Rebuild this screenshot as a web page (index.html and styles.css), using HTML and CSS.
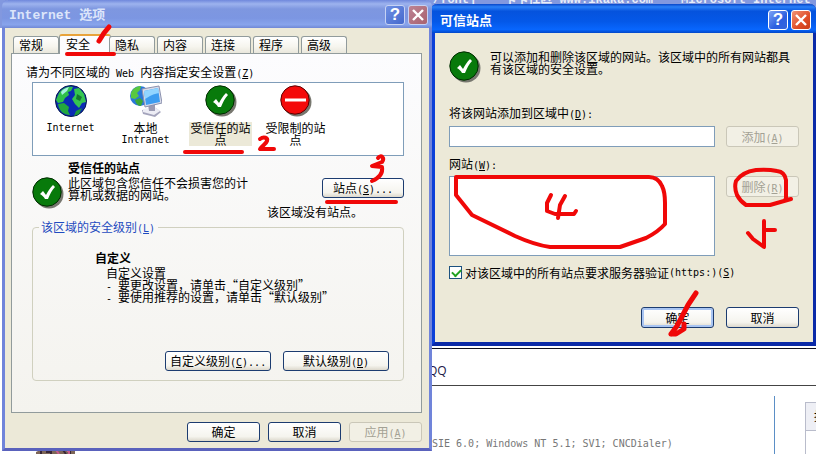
FILE: index.html
```html
<!DOCTYPE html>
<html lang="zh-CN">
<head>
<meta charset="utf-8">
<title>Internet 选项</title>
<link rel="stylesheet" href="styles.css">
</head>
<body>
<svg class="defs" aria-hidden="true">
  <symbol id="check" viewBox="0 0 32 32">
    <circle cx="17" cy="17" r="14.5" fill="#77776f"/>
    <circle cx="15" cy="15" r="14.2" fill="#087a0b" stroke="#002c00"/>
    <path d="M8 17l3-3 3 4c2-4 4-7 7-10l2 2c-3 3-5 7-7 12h-3c-1-2-3-4-5-5z" fill="#fff"/>
  </symbol>
</svg>
<div class="desktop">
  <main class="page">
    <div class="page-title"><span>/font]</span><span>卡卡社区 www.ikaka.com</span><span>Microsoft Internet Ex</span></div>
    <div class="page-body">
      <p class="page-qq">QQ</p>
      <div class="page-row">
        <p class="agent">SIE 6.0; Windows NT 5.1; SV1; CNCDialer)</p>
        <div class="side"><div class="side-head">报</div></div>
      </div>
    </div>
    <svg class="picture" viewBox="0 0 39 4" aria-hidden="true">
      <path d="M0 4V2L4 0H39V4z" fill="#7d6658"/>
      <path d="M5 0v4M10 2h5v2M27 0l3 4M34 0v4" stroke="#382736" stroke-width="2" fill="none"/>
      <path d="M20 0l3 4M31 1h2v3" stroke="#c8598c" stroke-width="2"/>
    </svg>
  </main>

  <section class="window sites">
    <header class="titlebar">
      <h1>可信站点</h1>
      <button class="cap" aria-label="帮助">?</button>
      <button class="cap close" aria-label="关闭"><svg viewBox="0 0 18 18"><path d="M4 4l10 10M14 4L4 14"/></svg></button>
    </header>
    <div class="sites-body">
      <div class="intro">
        <svg class="icon"><use href="#check"/></svg>
        <p>可以添加和删除该区域的网站。该区域中的所有网站都具有该区域的安全设置。</p>
      </div>
      <label class="add-label" for="site">将该网站添加到区域中<span class="la">(<u>D</u>):</span></label>
      <div class="row">
        <input id="site" class="box" type="text">
        <button class="btn" disabled>添加<span class="la">(<u>A</u>)</span></button>
      </div>
      <label class="list-label" for="list">网站<span class="la">(<u>W</u>):</span></label>
      <div class="row">
        <select id="list" class="box list" size="5"></select>
        <button class="btn" disabled>删除<span class="la">(<u>R</u>)</span></button>
      </div>
      <label class="verify"><input type="checkbox" checked>对该区域中的所有站点要求服务器验证<span class="la">(https:)(<u>S</u>)</span></label>
      <footer class="actions">
        <button class="btn default">确定</button>
        <button class="btn">取消</button>
      </footer>
    </div>
  </section>

  <section class="window options">
    <header class="titlebar">
      <h1><span class="lt">Internet </span>选项</h1>
      <button class="cap" aria-label="帮助">?</button>
      <button class="cap close" aria-label="关闭"><svg viewBox="0 0 18 18"><path d="M4 4l10 10M14 4L4 14"/></svg></button>
    </header>
    <div class="options-body">
      <nav class="tabs">
        <button class="tab">常规</button>
        <button class="tab selected">安全</button>
        <button class="tab">隐私</button>
        <button class="tab">内容</button>
        <button class="tab">连接</button>
        <button class="tab">程序</button>
        <button class="tab">高级</button>
      </nav>
      <div class="pane">
        <p class="prompt">请为不同区域的<span class="la"> Web </span>内容指定安全设置<span class="la">(<u>Z</u>)</span></p>
        <div class="zones">
          <button class="zone">
            <svg class="icon" viewBox="0 0 32 32">
              <circle cx="16" cy="16" r="15.5" fill="#0a2cb4" stroke="#06184a"/>
              <path d="M4 8C8 2 14 1 18 2l-2 4-3 1 1 3-4 3-2 4-5 1-2-3z" fill="#2fc04a"/>
              <path d="M3 19l6-1 5 4-1 4 2 4C9 30 4 26 3 19z" fill="#23a83d"/>
              <path d="M19 4l5-1 5 6 2 8-4 1-3 5-4-4-3-5 3-4z" fill="#35c650"/>
              <path d="M21 26l6-3-3 6-5 2z" fill="#1e9a38"/>
              <path d="M6 7c2-3 5-4 8-5l-2 4-5 4z" fill="#a6f0e0"/>
              <path d="M22 9l5 3-2 4-4-2z" fill="#147a30"/>
            </svg>
            <span class="la">Internet</span>
          </button>
          <button class="zone">
            <svg class="icon" viewBox="0 0 32 32">
              <circle cx="10" cy="11" r="10" fill="#2a78d8"/>
              <path d="M1 8C3 3 7 1 11 1l-1 4-3 3 2 3-4 3-4-1z" fill="#58c840"/>
              <path d="M5 15l5-2 3 3-2 5C8 21 6 19 5 15z" fill="#3da836"/>
              <path d="M12 25l14-2 5 4-6 5-12-3z" fill="#a4a4bc"/>
              <path d="M13 24l12-2 5 4-6 4-11-3z" fill="#ededf5"/>
              <path d="M18 19h7v7h-6z" fill="#9a9ab2"/>
              <path d="M12 4L29 1l3 17-17 4z" fill="#d9dcea" stroke="#8b91ae"/>
              <path d="M14 6l14-3 2 14-14 3z" fill="#3d9df0"/>
              <path d="M14 6l14-3 1 5c-6 1-9 3-14 6z" fill="#92d5ff"/>
            </svg>
            <span>本地</span><span class="la">Intranet</span>
          </button>
          <button class="zone picked">
            <svg class="icon"><use href="#check"/></svg>
            <span class="name">受信任的站点</span>
          </button>
          <button class="zone">
            <svg class="icon" viewBox="0 0 32 32">
              <circle cx="17" cy="17" r="14.5" fill="#77776f"/>
              <circle cx="15" cy="15" r="14.2" fill="#f40a0a" stroke="#5c0000"/>
              <path d="M5 13.500h21v3H5z" fill="#fff"/>
            </svg>
            <span class="name">受限制的站点</span>
          </button>
        </div>
        <div class="detail">
          <svg class="icon"><use href="#check"/></svg>
          <div class="about">
            <h2>受信任的站点</h2>
            <p>此区域包含您信任不会损害您的计算机或数据的网站。</p>
          </div>
          <div class="manage">
            <button class="btn">站点<span class="la">(<u>S</u>)...</span></button>
            <p>该区域没有站点。</p>
          </div>
        </div>
        <fieldset>
          <legend>该区域的安全级别<span class="la">(<u>L</u>)</span></legend>
          <h2>自定义</h2>
          <div class="level">
            <p>自定义设置</p>
            <p><span class="la">- </span>要更改设置，请单击“自定义级别”</p>
            <p><span class="la">- </span>要使用推荐的设置，请单击“默认级别”</p>
          </div>
          <div class="level-buttons">
            <button class="btn">自定义级别<span class="la">(<u>C</u>)...</span></button>
            <button class="btn">默认级别<span class="la">(<u>D</u>)</span></button>
          </div>
        </fieldset>
      </div>
      <footer class="dialog-buttons">
        <button class="btn">确定</button>
        <button class="btn">取消</button>
        <button class="btn" disabled>应用<span class="la">(<u>A</u>)</span></button>
      </footer>
    </div>
  </section>

  <svg class="marks" viewBox="0 0 816 454" aria-hidden="true">
    <path d="M67 54H114M185 152H242M327 202H396"/>
    <path class="thick" d="M109 27L104 33L99 41"/>
    <path d="M260 139C264 136 268 138 267 141C266 144 262 146 260 149L274 149"/>
    <path d="M378 158C381 154 385 158 382 162L372 166L382 167C383 173 379 178 372 181"/>
    <path d="M456 177H649Q658 177 662 186Q665 192 665 203V224Q658 232 646 238L620 247H550Q535 245 515 236L472 215L456 195Z"/>
    <path d="M551 195L547 203V211L555 214H574L576 211M565 196L560 205L558 218"/>
    <path d="M786 200V180Q785 172 777 171Q768 169 756 170Q742 172 736 181Q734 188 737 195Q740 201 746 205H770L791 199M785 200L791 199"/>
    <path d="M748 233L753 239L764 247V221M765 230H775"/>
    <path class="thick" d="M696 293L688 305L677 326L671 334M671 334H676L684 329V324"/>
  </svg>
</div>
</body>
</html>
```
FILE: styles.css
```css
* { box-sizing: border-box; }

body {
  margin: 0;
  font: 12px/12px "Noto Sans CJK SC", sans-serif;
  text-spacing-trim: space-all;
  color: #000;
}

h1, h2, p { margin: 0; }
h2 { font-size: 12px; line-height: 12px; }

button, input, select {
  font: inherit;
  color: inherit;
  margin: 0;
  border-radius: 0;
}

.la { font-family: "DejaVu Sans Mono", monospace; font-size: 10px; line-height: 0; white-space: pre; }
.defs { position: absolute; width: 0; height: 0; }
.icon { display: block; width: 32px; height: 32px; flex: none; }

.desktop { position: relative; min-height: 100vh; overflow: hidden; background: #fff; }

/* browser page behind the dialogs */
.page { display: flex; flex-direction: column; min-height: 100vh; }
.page-title {
  display: flex;
  gap: 28px;
  height: 28px;
  padding-left: 433px;
  background: #8298df;
  color: #e8eefa;
  font: bold 12px/14px "Liberation Mono", "Noto Sans CJK SC", monospace;
  white-space: nowrap;
  overflow: hidden;
}
.page-title span { margin-top: -7px; }
.page-body {
  flex: 1;
  display: flex;
  flex-direction: column;
  margin: 320px 0 0 432px;
  border-top: 1px solid #101020;
}
.page-qq {
  height: 37px;
  padding-top: 16px;
  margin-left: -4px;
  border-bottom: 1px solid #444;
  font-family: "Open Sans", sans-serif;
  color: #201848;
}
.page-row { flex: 1; display: flex; align-items: stretch; padding-top: 10px; }
.agent {
  flex: 1;
  padding-top: 42px;
  border-right: 1px solid #5b8fc6;
  font: 10px/12px "DejaVu Sans Mono", monospace;
  color: #777;
}
.side { width: 11px; margin: 6px 0 0 30px; border: solid #b9bccb; border-width: 1px 0 0 1px; overflow: hidden; }
.side-head { height: 28px; padding: 7px 0 0 8px; border-bottom: 1px solid #b9bccb; background: #eeeff5; }
.picture { position: absolute; left: 36px; bottom: 0; width: 39px; height: 4px; }

/* window chrome */
.window { position: absolute; background: #ece9d8; }
.titlebar { display: flex; align-items: center; gap: 3px; }
.titlebar h1 { flex: 1; font-size: 13px; line-height: 16px; color: #fff; }
.lt { font-family: "Liberation Mono", monospace; white-space: pre; }
.cap {
  width: 20px;
  height: 20px;
  padding: 0;
  border: 1px solid #fff;
  border-radius: 3px;
  background: linear-gradient(135deg, #7da2f5, #2c5fe0 60%, #3565dc);
  color: #fff;
  font: bold 17px/18px "Liberation Sans", sans-serif;
}
.cap svg { display: block; width: 18px; height: 18px; }
.cap path { stroke: #fff; stroke-width: 2.4; fill: none; }
.close { background: linear-gradient(135deg, #f19376, #df4d27 60%, #c93d17); }

.btn {
  min-width: 73px;
  height: 20px;
  padding: 0 4px;
  border: 1px solid #1c3c70;
  border-radius: 3px;
  background: linear-gradient(#fff, #f5f4ee 75%, #dcd8cc);
  line-height: 16px;
  white-space: nowrap;
}
.btn:disabled { border-color: #cac7b8; background: #f2f0e5; color: #a3a194; }

/* internet options */
.options {
  top: 0;
  left: 2px;
  width: 430px;
  border: solid #7084da;
  border-width: 0 3px 3px;
  border-bottom-color: #5a62bc;
  border-radius: 6px 6px 0 0;
}
.options .titlebar {
  height: 28px;
  margin: 0 -3px;
  padding: 2px 4px 0 7px;
  border-radius: 6px 6px 0 0;
  background: linear-gradient(#7088dc, #9db3ee 14%, #7e97e0 32%, #7c96e2 65%, #88a4ec 88%, #7088d6);
}
.options h1 { color: #dce5fa; }
.options .cap { border-color: #c6d2f4; background: linear-gradient(135deg, #6f90e4, #4468cc); }
.options .close { background: linear-gradient(135deg, #bd8394, #a8626f); }
.options-body { padding: 6px 7px 6px 6px; }

.tabs { display: flex; align-items: flex-end; gap: 2px; height: 20px; padding-left: 2px; margin-bottom: -1px; position: relative; }
.tab {
  width: 46px;
  height: 17px;
  margin-bottom: 1px;
  padding: 0 0 0 5px;
  border: 1px solid #919b9c;
  border-bottom: 0;
  border-radius: 3px 3px 0 0;
  background: linear-gradient(#fff, #f6f5ee 60%, #e9e7dc);
  line-height: 16px;
  text-align: left;
}
.tab.selected {
  width: 52px;
  height: 20px;
  margin: 0 -4px 0 -2px;
  padding: 0 0 2px 6px;
  border-top: 2px solid #e8a33a;
  background: #fcfcfe;
}

.pane {
  padding: 12px 17px 31px 20px;
  border: 1px solid #919b9c;
  background: linear-gradient(#fcfcfe, #f4f3ee);
}
.prompt { margin-left: -6px; }
.zones { display: flex; margin-top: 4px; padding: 2px 0 9px; border: 1px solid #7f9db9; background: #fff; }
.zone {
  display: flex;
  flex-direction: column;
  align-items: center;
  width: 75px;
  padding: 0;
  border: 0;
  background: none;
}
.zone .icon { margin-bottom: 5px; }
.zone .la { line-height: 12px; }
.zone .name { width: 63px; padding: 0 1px; }
.picked .name { background: #ece9d8; }

.detail { display: flex; gap: 4px; margin-top: 6px; }
.detail > .icon { margin-top: 15px; }
.about { flex: 1; }
.about p { margin-top: 3px; max-width: 180px; }
.manage { display: flex; flex-direction: column; gap: 8px; width: 137px; padding-top: 16px; }
.manage .btn { align-self: flex-end; width: 82px; }

fieldset { margin: 3px 0 0; padding: 19px 14px 9px 6px; border: 1px solid #d0d0bf; border-radius: 4px; min-width: 0; }
legend { padding: 0 3px 0 2px; color: #1f4bc0; }
fieldset h2 { margin-left: 56px; }
.level { margin: 3px 0 48px 67px; }
.level-buttons { display: flex; justify-content: flex-end; gap: 12px; }
.level-buttons .btn { width: 106px; }
.dialog-buttons { display: flex; justify-content: flex-end; gap: 8px; margin-top: 9px; }

/* trusted sites */
.sites {
  top: 4px;
  left: 431px;
  right: 0;
  border: solid #0b3fd8;
  border-width: 0 3px 4px 4px;
  border-right-color: #0a2aa8;
  border-bottom-color: #0a2aa8;
  border-radius: 6px 6px 0 0;
}
.sites .titlebar {
  height: 29px;
  margin: 0 -3px 0 -4px;
  padding: 2px 5px 0 9px;
  border-radius: 6px 6px 0 0;
  background: linear-gradient(#0846c8, #2a80f8 10%, #0553dd 25%, #0458e8 60%, #0866fd 88%, #0347c8);
}
.sites-body { padding: 18px 14px 14px; }
.intro { display: flex; gap: 9px; }
.intro p { max-width: 302px; }
.add-label, .list-label { display: block; }
.add-label { margin: 24px 0 7px; }
.list-label { margin: 11px 0 6px; }
.row { display: flex; align-items: flex-start; gap: 11px; }
.box { flex: 1; min-width: 0; height: 21px; padding: 2px; border: 1px solid #7f9db9; background: #fff; }
.list { height: 80px; }
.sites .btn { height: 21px; }
.verify { display: flex; align-items: center; margin-top: 10px; }
.verify input {
  appearance: none;
  width: 13px;
  height: 13px;
  margin-right: 3px;
  border: 1px solid #1c5180;
  background: #fff;
}
.verify input:checked::before {
  content: "";
  display: block;
  width: 7px;
  height: 4px;
  margin: 2px;
  border: solid #21a121;
  border-width: 0 0 2px 2px;
  transform: rotate(-45deg);
}
.actions { display: flex; justify-content: flex-end; gap: 12px; margin-top: 28px; }
.default { box-shadow: inset 0 0 0 2px #a9c5f2; }

/* hand-drawn marks over the dialogs */
.marks { position: absolute; top: 0; left: 0; width: 816px; height: 454px; pointer-events: none; }
.marks path { fill: none; stroke: #f00808; stroke-width: 4; stroke-linecap: round; stroke-linejoin: round; }
.marks .thick { stroke-width: 5; }
```
